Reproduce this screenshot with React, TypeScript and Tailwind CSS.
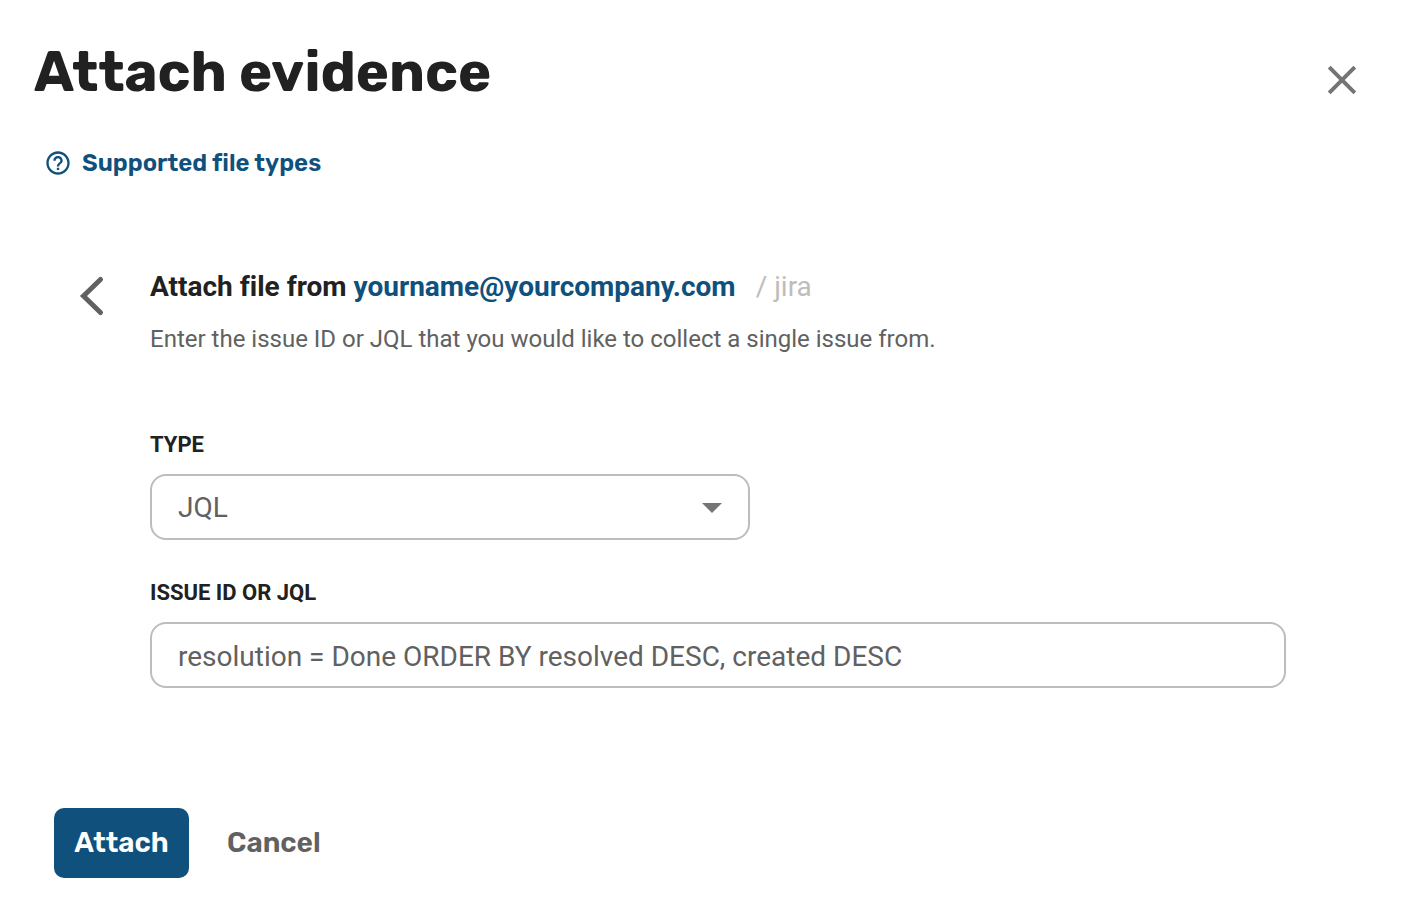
import React, { useState } from 'react';

export default function App() {
  const [type, setType] = useState('JQL');
  const [query, setQuery] = useState('resolution = Done ORDER BY resolved DESC, created DESC');

  return (
    <main className="min-h-screen bg-white pt-9 pb-8 font-[Roboto,sans-serif] text-[#212121] [font-variant-ligatures:none]">
      <header className="flex items-start justify-between pr-10 pl-[34px]">
        <h1 className="font-[Rubik,Inter,sans-serif] text-[56px] leading-[72px] font-bold">Attach evidence</h1>
        <button type="button" aria-label="Close" className="mt-5 text-[#757575]">
          <svg className="size-12" viewBox="0 0 48 48" fill="none" stroke="currentColor" strokeWidth="4">
            <path d="M11.2 11.2 36.8 36.8M36.8 11.2 11.2 36.8" />
          </svg>
        </button>
      </header>

      <a href="#file-types" className="mt-[39px] ml-11 flex w-fit items-center gap-2.5 font-[Rubik,Inter,sans-serif] text-2xl leading-8 font-semibold text-[#10507d]">
        <svg className="size-7" viewBox="0 0 24 24" fill="currentColor">
          <path d="M11 18h2v-2h-2v2zm1-16C6.48 2 2 6.48 2 12s4.48 10 10 10 10-4.48 10-10S17.52 2 12 2zm0 18c-4.41 0-8-3.59-8-8s3.59-8 8-8 8 3.59 8 8-3.59 8-8 8zm0-14c-2.21 0-4 1.79-4 4h2c0-1.1.9-2 2-2s2 .9 2 2c0 2-3 1.75-3 5h2c0-2.25 3-2.5 3-5 0-2.21-1.79-4-4-4z" />
        </svg>
        Supported file types
      </a>

      <section className="mt-[88px] flex items-start pr-30 pl-17">
        <button type="button" aria-label="Back" className="mt-[5px] mr-[34px] text-[#616161]">
          <svg className="size-12" viewBox="0 0 48 48" fill="none" stroke="currentColor" strokeWidth="5" strokeLinecap="round">
            <path d="M32.5 7.5 15.5 24 32.5 40.5" />
          </svg>
        </button>
        <div className="flex-1">
          <h2 className="text-[28px] leading-10 font-bold">
            Attach file from <a href="mailto:yourname@yourcompany.com" className="text-[#10507d]">yourname@yourcompany.com</a>
            <span className="ml-5 font-normal text-[#bdbdbd]">/ jira</span>
          </h2>
          <p className="mt-3 text-2xl leading-10 text-[#616161]">
            Enter the issue ID or JQL that you would like to collect a single issue from.
          </p>
          <label htmlFor="type" className="mt-[69px] block text-[22px] leading-[34px] font-bold">TYPE</label>
          <div className="relative mt-3 max-w-[600px]">
            <select
              id="type"
              value={type}
              onChange={(e) => setType(e.target.value)}
              className="block h-[66px] w-full appearance-none rounded-2xl border-2 border-[#bdbdbd] px-[26px] pt-0.5 text-[28px] text-[#616161]"
            >
              <option>JQL</option>
              <option>Issue ID</option>
            </select>
            <svg className="pointer-events-none absolute top-7 right-7 h-3 w-5" viewBox="0 0 20 12" fill="#757575">
              <path d="M0 1h20L10 11z" />
            </svg>
          </div>
          <label htmlFor="query" className="mt-9 block text-[22px] leading-[34px] font-bold">ISSUE ID OR JQL</label>
          <input
            id="query"
            type="text"
            value={query}
            onChange={(e) => setQuery(e.target.value)}
            className="mt-3 block h-[66px] w-full rounded-2xl border-2 border-[#bdbdbd] px-[26px] pt-0.5 text-[28px] text-[#616161]"
          />
        </div>
      </section>

      <footer className="mt-30 flex gap-5 pl-[54px] font-[Rubik,Inter,sans-serif] text-[28px] font-semibold">
        <button type="button" className="h-[70px] min-w-[135px] rounded-[10px] bg-[#10507d] px-[18px] text-white">Attach</button>
        <button type="button" className="h-[70px] px-[18px] text-[#616161]">Cancel</button>
      </footer>
    </main>
  );
}
